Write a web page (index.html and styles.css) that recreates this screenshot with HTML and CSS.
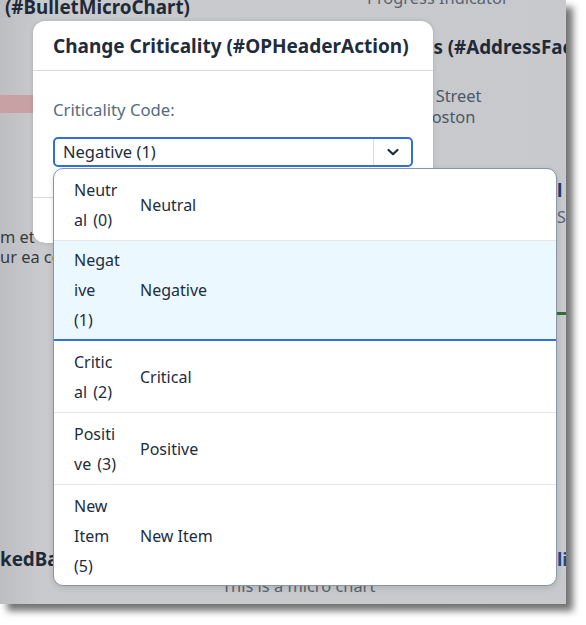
FILE: index.html
```html
<!DOCTYPE html>
<html>
<head>
<meta charset="utf-8">
<link rel="stylesheet" href="styles.css">
</head>
<body>
<div class="frame">
  <div class="page">
    <div class="col-left">
      <div class="bg-title t1">(#BulletMicroChart)</div>
      <div class="pink-bar"></div>
      <div class="lorem">
        <div>m et dolore magna aliqua</div>
        <div>ur ea commodo consequat</div>
      </div>
      <div class="bg-title t2">kedBarMicroChart</div>
      <div class="micro-note">This is a micro chart</div>
    </div>
    <div class="col-right">
      <div class="progress">Progress Indicator</div>
      <div class="bg-title addr">Address (#AddressFacet)</div>
      <div class="street">Main Street</div>
      <div class="city">Boston</div>
    </div>
    <div class="col-strip">
      <div class="strip-l">l</div>
      <div class="strip-s">S</div>
      <div class="strip-green"></div>
      <div class="strip-li">li</div>
    </div>
  </div>

  <div class="dialog">
    <div class="dialog-header">Change Criticality (#OPHeaderAction)</div>
    <div class="dialog-body">
      <div class="label">Criticality Code:</div>
      <div class="select">
        <span class="select-value">Negative (1)</span>
        <span class="select-arrow">
          <svg width="14" height="10" viewBox="0 0 14 10"><path d="M2.5 3 L7 7.2 L11.5 3" fill="none" stroke="#1d2d3e" stroke-width="2.2" stroke-linecap="round" stroke-linejoin="round"/></svg>
        </span>
      </div>
    </div>
    <div class="dialog-footer"></div>
  </div>

  <div class="popover">
    <div class="row">
      <div class="cell-code">Neutral (0)</div>
      <div class="cell-text">Neutral</div>
    </div>
    <div class="row selected">
      <div class="cell-code">Negative (1)</div>
      <div class="cell-text">Negative</div>
    </div>
    <div class="row">
      <div class="cell-code">Critical (2)</div>
      <div class="cell-text">Critical</div>
    </div>
    <div class="row">
      <div class="cell-code">Positive (3)</div>
      <div class="cell-text">Positive</div>
    </div>
    <div class="row last">
      <div class="cell-code">New Item (5)</div>
      <div class="cell-text">New Item</div>
    </div>
  </div>
</div>
</body>
</html>
```

FILE: styles.css
```css
* { box-sizing: border-box; }
html, body { margin: 0; padding: 0; background: #ffffff; }
body { font-family: "Noto Sans", "Liberation Sans", sans-serif; width: 586px; height: 625px; overflow: hidden; }

.frame {
  position: relative;
  width: 566px;
  height: 604px;
  overflow: hidden;
  background: linear-gradient(90deg, #bdbec1 0px, #c9cacd 40px, #c8c9cc 100%);
  box-shadow: 7px 7px 7px rgba(0,0,0,0.55);
}

.page { display: flex; height: 100%; }
.col-left { width: 367px; flex: none; display: flex; flex-direction: column; }
.col-right { width: 190px; flex: none; display: flex; flex-direction: column; }
.col-strip { width: 20px; flex: none; display: flex; flex-direction: column; overflow: hidden; }

.bg-title { font-weight: 700; font-size: 18.8px; line-height: 22px; color: #1f2a38; white-space: nowrap; }
.t1 { margin-top: -4px; padding-left: 5px; }
.pink-bar { margin-top: 77px; height: 18px; width: 120px; background: #c8a1a5; }
.lorem { margin-top: 114px; font-size: 16.4px; line-height: 20px; color: #363a42; white-space: nowrap; }
.t2 { margin-top: 281px; }
.micro-note { margin-top: 6px; padding-left: 222px; font-size: 16.4px; line-height: 20px; color: #5a6270; white-space: nowrap; }

.progress { margin-top: -12px; font-size: 16.4px; line-height: 20px; color: #5a6270; white-space: nowrap; }
.addr { margin-top: 28px; padding-left: 1px; }
.street { margin-top: 27px; padding-left: 26px; font-size: 16.4px; line-height: 21px; color: #4a5868; white-space: nowrap; }
.city { padding-left: 54px; font-size: 16.4px; line-height: 21px; color: #4a5868; white-space: nowrap; }

.strip-l { margin-top: 179px; font-weight: 700; font-size: 18px; line-height: 22px; color: #1b3c6e; }
.strip-s { margin-top: 6px; font-size: 16px; line-height: 20px; color: #5a6270; }
.strip-green { margin-top: 85px; height: 3px; background: #2f6d3c; }
.strip-li { margin-top: 233px; font-weight: 700; font-size: 18px; line-height: 22px; color: #1c4a8a; }

.dialog {
  position: absolute;
  left: 33px; top: 21px;
  width: 400px; height: 222px;
  background: #ffffff;
  border-radius: 12px;
  box-shadow: 0 0 4px rgba(0,0,0,0.15);
  display: flex; flex-direction: column;
  overflow: hidden;
}
.dialog-header {
  height: 50px;
  padding-left: 20px;
  display: flex; align-items: center;
  font-weight: 700; font-size: 19px; color: #1d2d3e;
  border-bottom: 1px solid #d9dadd;
  white-space: nowrap;
}
.dialog-body { padding: 29px 20px 0 20px; height: 126px; }
.label { font-size: 16.7px; line-height: 20px; color: #556b82; }
.select {
  margin-top: 17px;
  height: 30px;
  border: 2px solid #2f6fe4;
  border-radius: 5px;
  display: flex; align-items: stretch;
}
.select-value { flex: 1; padding-left: 8px; font-size: 16.5px; line-height: 26px; color: #1d2d3e; }
.select-arrow { width: 38px; border-left: 1px solid #dcdcdc; display: flex; align-items: center; justify-content: center; }
.dialog-footer { flex: 1; border-top: 1px solid #d9dadd; }

.popover {
  position: absolute;
  left: 53px; top: 168px;
  width: 504px; height: 418px;
  background: #ffffff;
  border: 1px solid #8596aa;
  border-radius: 10px;
  overflow: hidden;
  box-shadow: 0 2px 6px rgba(0,0,0,0.12);
}
.row {
  display: flex; align-items: center;
  padding: 5.5px 0;
  border-bottom: 1px solid #e5e5e5;
  font-size: 16px; line-height: 30px; color: #1d2d3e;
}
.row.selected { background: #ebf8ff; border-bottom: 2px solid #2f6fe4; padding: 4px 0; }
.row.last { border-bottom: none; padding-top: 6px; }
.cell-code { width: 46px; margin-left: 20px; overflow-wrap: anywhere; word-spacing: 2px; }
.cell-text { margin-left: 20px; }
```
